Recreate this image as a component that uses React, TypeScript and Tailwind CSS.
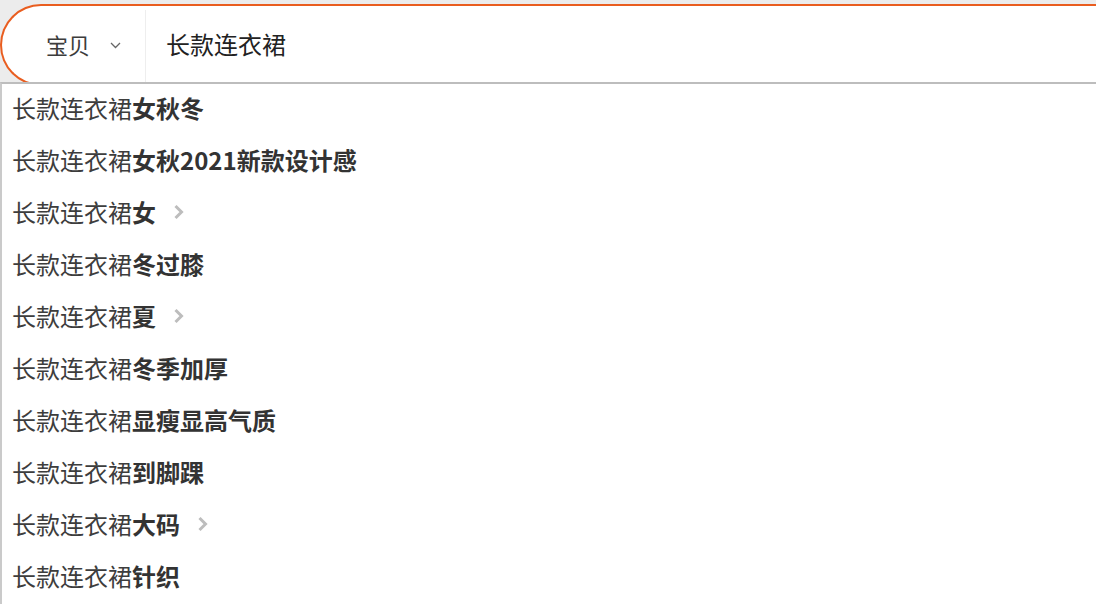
import React from "react";

const suggestions: { bold: string; more?: boolean }[] = [
  { bold: "女秋冬" },
  { bold: "女秋2021新款设计感" },
  { bold: "女", more: true },
  { bold: "冬过膝" },
  { bold: "夏", more: true },
  { bold: "冬季加厚" },
  { bold: "显瘦显高气质" },
  { bold: "到脚踝" },
  { bold: "大码", more: true },
  { bold: "针织" },
];

const query = "长款连衣裙";

export default function App() {
  return (
    <div
      className="relative h-screen w-full overflow-hidden bg-[#ececec] pt-[4px]"
      style={{ fontFamily: '"Noto Sans CJK SC", "Noto Sans", sans-serif' }}
    >
      {/* Search bar */}
      <div className="flex h-[82px] w-[1130px] items-stretch rounded-l-[42px] border-2 border-r-0 border-[#e95d1f] bg-white">
        <div className="flex w-[143px] shrink-0 items-center pb-[2px] pl-[44px]">
          <span className="text-[22px] leading-none text-[#3c3c3c]">宝贝</span>
          <svg className="ml-[20px] mt-[2px]" width="11" height="7" viewBox="0 0 11 7" fill="none">
            <path d="M1 1l4.5 4.5L10 1" stroke="#666" strokeWidth="1.3" />
          </svg>
        </div>
        <div className="mt-[4px] w-px bg-[#eeeeee]" />
        <div className="flex items-center pb-[2px] pl-[20px]">
          <span className="text-[24px] leading-none text-[#222]">{query}</span>
        </div>
      </div>

      {/* Suggestion dropdown */}
      <div className="absolute left-0 right-0 top-[82px] bottom-0 border-l-2 border-t-2 border-l-[#cacaca] border-t-[#bdbdbd] bg-white">
        {suggestions.map((s, i) => (
          <div key={i} className="flex h-[52px] items-center pb-[5px] pl-[10px] text-[24px] leading-none">
            <span className="text-[#3d3d3d]">{query}</span>
            <span className="font-bold text-[#333]">{s.bold}</span>
            {s.more && (
              <svg className="ml-[17px]" width="12" height="16" viewBox="0 0 12 16" fill="none">
                <path d="M2.5 2l6 6-6 6" stroke="#bdbdbd" strokeWidth="3" />
              </svg>
            )}
          </div>
        ))}
      </div>
    </div>
  );
}
